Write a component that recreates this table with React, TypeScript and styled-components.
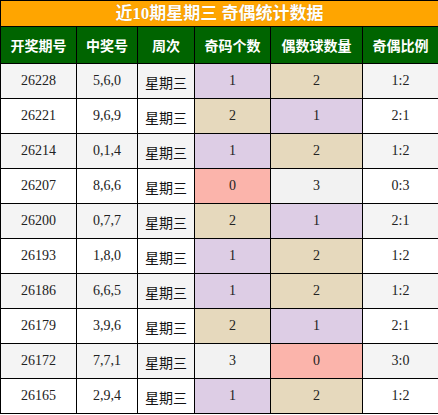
import React from "react";
import styled, { createGlobalStyle } from "styled-components";

const GlobalStyle = createGlobalStyle`
  body {
    margin: 0;
    background: #fff;
  }
`;

const Table = styled.table`
  width: 438px;
  border-collapse: collapse;
  table-layout: fixed;
  font-family: "Liberation Serif", "Noto Sans CJK SC", serif;
`;

const TitleCell = styled.th`
  height: 25px;
  padding: 0;
  line-height: 25px;
  background: #ffa500;
  color: #fff;
  font-family: "Liberation Serif", "Noto Sans CJK SC", serif;
  font-size: 17px;
  font-weight: bold;
  text-align: center;
  border: 1px solid #000;
  text-shadow: 0 0 1px rgba(0, 0, 0, 0.25);
`;

const HeadCell = styled.th`
  height: 36px;
  padding: 0;
  line-height: 20px;
  background: #006400;
  color: #fff;
  font-family: "Noto Sans CJK SC", sans-serif;
  font-size: 14px;
  font-weight: bold;
  border: 1px solid #000;
  text-align: center;
`;

const Row = styled.tr<{ $odd: boolean }>`
  background: ${p => (p.$odd ? "#f4f4f4" : "#fff")};
`;

const toneColors: Record<string, string> = {
  zero: "#fbb4ab",
  odd: "#ddcde5",
  even: "#e6d9bd",
  full: "#f2f2f2",
};

const Cell = styled.td<{ $tone?: string }>`
  height: 34px;
  padding: 0;
  line-height: 18px;
  border: 1px solid #000;
  text-align: center;
  font-size: 14px;
  color: #222;
  background: ${p => (p.$tone ? toneColors[p.$tone] : "transparent")};
`;

const WeekCell = styled(Cell)`
  height: 32px;
  padding-top: 2px;
  font-family: "Noto Sans CJK SC", sans-serif;
  font-size: 14px;
  color: #111;
`;

type Draw = { id: string; nums: string; odd: number };

const draws: Draw[] = [
  { id: "26228", nums: "5,6,0", odd: 1 },
  { id: "26221", nums: "9,6,9", odd: 2 },
  { id: "26214", nums: "0,1,4", odd: 1 },
  { id: "26207", nums: "8,6,6", odd: 0 },
  { id: "26200", nums: "0,7,7", odd: 2 },
  { id: "26193", nums: "1,8,0", odd: 1 },
  { id: "26186", nums: "6,6,5", odd: 1 },
  { id: "26179", nums: "3,9,6", odd: 2 },
  { id: "26172", nums: "7,7,1", odd: 3 },
  { id: "26165", nums: "2,9,4", odd: 1 },
];

const tone = (n: number) => ["zero", "odd", "even", "full"][n];

const headers: [string, number][] = [
  ["开奖期号", 76],
  ["中奖号", 61],
  ["周次", 57],
  ["奇码个数", 76],
  ["偶数球数量", 92],
  ["奇偶比例", 76],
];

const App = () => {
  return (
    <>
      <GlobalStyle />
      <Table>
        <colgroup>
          {headers.map(([h, w]) => (
            <col key={h} style={{ width: w }} />
          ))}
        </colgroup>
        <thead>
          <tr>
            <TitleCell colSpan={6}>近10期星期三 奇偶统计数据</TitleCell>
          </tr>
          <tr>
            {headers.map(([h]) => (
              <HeadCell key={h}>{h}</HeadCell>
            ))}
          </tr>
        </thead>
        <tbody>
          {draws.map((d, i) => {
            const even = 3 - d.odd;
            return (
              <Row key={d.id} $odd={i % 2 === 0}>
                <Cell>{d.id}</Cell>
                <Cell>{d.nums}</Cell>
                <WeekCell>星期三</WeekCell>
                <Cell $tone={tone(d.odd)}>{d.odd}</Cell>
                <Cell $tone={tone(even)}>{even}</Cell>
                <Cell>
                  {d.odd}:{even}
                </Cell>
              </Row>
            );
          })}
        </tbody>
      </Table>
    </>
  );
};

export default App;
